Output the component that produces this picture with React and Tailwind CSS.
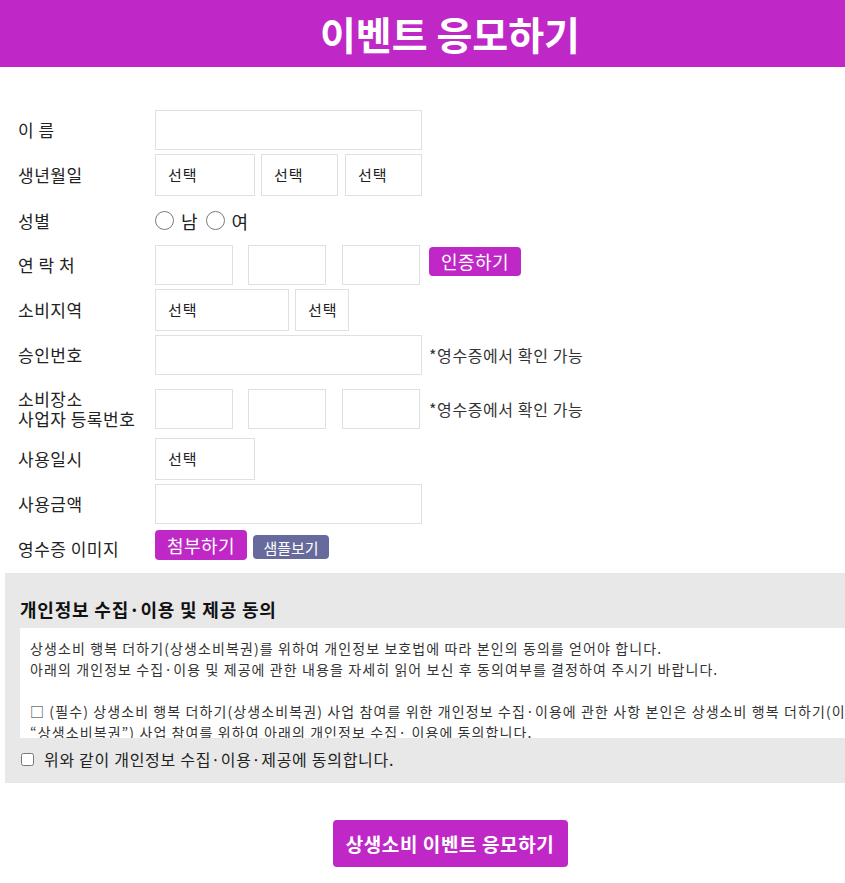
import React from 'react';

const font = { fontFamily: '"Noto Sans CJK KR", "Noto Sans", sans-serif' };

function Row({ label, className = '', children }) {
  return (
    <div className={`flex items-center ${className}`}>
      <div className="w-[155px] shrink-0 pl-[18px] text-[17px] leading-[20px] tracking-[0.5px] text-[#222]">{label}</div>
      <div className="flex items-center">{children}</div>
    </div>
  );
}

function Box({ w, h = 'h-[40px]', text, className = '' }) {
  return (
    <div className={`${w} ${h} flex items-center border border-[#e0e0e0] pl-[12px] text-[15px] tracking-[1px] text-[#222] ${className}`}>
      {text}
    </div>
  );
}

function Radio({ label }) {
  return (
    <span className="flex items-center">
      <span className="mr-[7px] h-[19px] w-[19px] rounded-full border border-[#7a7a7a] bg-white" />
      <span className="mr-[8px] text-[18px] leading-[20px] text-[#222]">{label}</span>
    </span>
  );
}

const note = <span className="ml-[7px] text-[16px] tracking-[0.6px] text-[#333]">*영수증에서 확인 가능</span>;

export default function App() {
  return (
    <div className="w-full overflow-hidden bg-white" style={font}>
      <div className="w-[900px]">
        <header className="flex h-[67px] items-center justify-center bg-[#bf28c7]">
          <h1 className="text-[39px] font-bold leading-none text-white">이벤트 응모하기</h1>
        </header>

        <form className="pt-[43px]">
          <Row label="이 름" className="h-[40px]">
            <Box w="w-[267px]" />
          </Row>
          <Row label="생년월일" className="mt-[4px] h-[42px]">
            <Box w="w-[100px]" h="h-[42px]" text="선택" />
            <Box w="w-[77px]" h="h-[42px]" text="선택" className="ml-[6px]" />
            <Box w="w-[77px]" h="h-[42px]" text="선택" className="ml-[7px]" />
          </Row>
          <Row label="성별" className="mt-[4px] h-[41px]">
            <Radio label="남" />
            <Radio label="여" />
          </Row>
          <Row label="연 락 처" className="mt-[4px] h-[40px]">
            <Box w="w-[78px]" />
            <Box w="w-[78px]" className="ml-[15px]" />
            <Box w="w-[78px]" className="ml-[16px]" />
            <button type="button" className="ml-[9px] -mt-[8px] h-[29px] w-[92px] rounded-[4px] bg-[#bf28c7] text-[18px] leading-none tracking-[0.5px] text-white">인증하기</button>
          </Row>
          <Row label="소비지역" className="mt-[4px] h-[42px]">
            <Box w="w-[134px]" h="h-[42px]" text="선택" />
            <Box w="w-[54px]" h="h-[42px]" text="선택" className="ml-[6px]" />
          </Row>
          <Row label="승인번호" className="mt-[4px] h-[40px]">
            <Box w="w-[267px]" />
            {note}
          </Row>
          <Row label={<>소비장소<br />사업자 등록번호</>} className="mt-[14px] h-[40px]">
            <Box w="w-[78px]" />
            <Box w="w-[78px]" className="ml-[15px]" />
            <Box w="w-[78px]" className="ml-[16px]" />
            <span className="ml-[2px]">{note}</span>
          </Row>
          <Row label="사용일시" className="mt-[9px] h-[42px]">
            <Box w="w-[100px]" h="h-[42px]" text="선택" />
          </Row>
          <Row label="사용금액" className="mt-[4px] h-[40px]">
            <Box w="w-[267px]" />
          </Row>
          <Row label={<span className="relative top-[4px]">영수증 이미지</span>} className="mt-[6px] h-[30px]">
            <button type="button" className="h-[30px] w-[92px] rounded-[4px] bg-[#bf28c7] text-[18px] leading-none tracking-[0.5px] text-white">첨부하기</button>
            <button type="button" className="ml-[6px] mt-[4px] h-[24px] w-[76px] rounded-[4px] bg-[#676a9c] text-[15px] leading-none text-white">샘플보기</button>
          </Row>
        </form>

        <section className="ml-[5px] mt-[13px] h-[210px] bg-[#e8e8e8] pt-[24px]">
          <h2 className="pl-[15px] text-[18px] font-bold leading-[24px] tracking-[0.8px] text-[#111]">개인정보 수집·이용 및 제공 동의</h2>
          <div className="ml-[15px] mt-[7px] h-[110px] overflow-hidden bg-white pl-[10px] pt-[10px] text-[14px] leading-[21px] tracking-[1.1px] text-[#333]">
            <p className="whitespace-nowrap">
              상생소비 행복 더하기(상생소비복권)를 위하여 개인정보 보호법에 따라 본인의 동의를 얻어야 합니다.<br />
              아래의 개인정보 수집·이용 및 제공에 관한 내용을 자세히 읽어 보신 후 동의여부를 결정하여 주시기 바랍니다.<br />
              <br />
              □ (필수) 상생소비 행복 더하기(상생소비복권) 사업 참여를 위한 개인정보 수집·이용에 관한 사항 본인은 상생소비 행복 더하기(이하<br />
              “상생소비복권”) 사업 참여를 위하여 아래의 개인정보 수집· 이용에 동의합니다.
            </p>
          </div>
          <label className="mt-[11px] flex items-center pl-[16px] text-[16px] leading-[20px] tracking-[0.7px] text-[#222]">
            <input type="checkbox" className="m-0 h-[13px] w-[13px]" />
            <span className="ml-[10px]">위와 같이 개인정보 수집·이용·제공에 동의합니다.</span>
          </label>
        </section>

        <div className="flex justify-center pb-[16px] pt-[37px]">
          <button type="button" className="h-[47px] w-[235px] rounded-[4px] bg-[#bf28c7] text-[19px] font-bold leading-none tracking-[0.6px] text-white">상생소비 이벤트 응모하기</button>
        </div>
      </div>
    </div>
  );
}
